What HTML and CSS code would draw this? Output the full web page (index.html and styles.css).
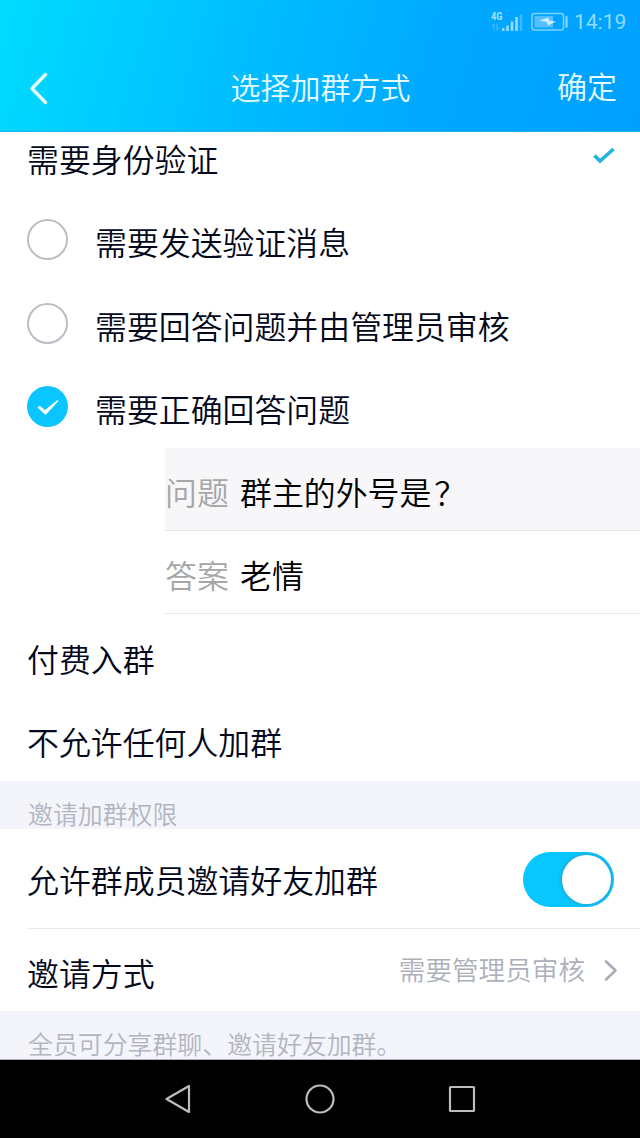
FILE: index.html
```html
<!DOCTYPE html>
<html lang="zh-CN">
<head>
    <meta charset="UTF-8">
    <meta name="viewport" content="width=device-width, initial-scale=1.0">
    <title>选择加群方式</title>
    <link rel="stylesheet" href="styles.css">
</head>
<body>
    <header class="header">
        <div class="status-bar">
            <svg class="signal" width="32" height="24" viewBox="0 0 32 24">
                <text x="0" y="9.5" class="net" textLength="11.5" lengthAdjust="spacingAndGlyphs">4G</text>
                <path class="data" d="M3 20v-6l-2 2M6 14v6l2-2"/>
                <path class="bars" d="M12.2 18v3M16.5 15.5V21M21 11.5V21M25.5 7v14"/>
                <path class="bars dim" d="M30 4v17"/>
            </svg>
            <svg class="battery" width="38" height="20" viewBox="0 0 38 20">
                <rect class="shell" x="1" y="1.5" width="31.5" height="16.5" rx="2.5"/>
                <rect class="level" x="3.5" y="4" width="18.5" height="11.5"/>
                <path class="bolt" d="M8.5 8.500L17 5.500l1.500 3 6.500 1L17 13.500l-1.500-3.500z"/>
                <path class="cap" d="M35.5 5v10"/>
            </svg>
            <span class="time">14:19</span>
        </div>
        <div class="title-bar">
            <svg class="back" width="20" height="34" viewBox="0 0 20 34">
                <path d="M16.5 3.500L3 17.500l13.500 14"/>
            </svg>
            <h1>选择加群方式</h1>
            <span class="confirm">确定</span>
        </div>
    </header>

    <main class="content">
        <div class="row row-first">
            <span class="label">需要身份验证</span>
            <svg class="check" width="24" height="20" viewBox="0 0 24 20">
                <path d="M2.5 9.500l5.500 5.500L21.500 3"/>
            </svg>
        </div>
        <div class="row">
            <span class="radio"></span>
            <span class="label">需要发送验证消息</span>
        </div>
        <div class="row row-tall">
            <span class="radio"></span>
            <span class="label">需要回答问题并由管理员审核</span>
        </div>
        <div class="row">
            <span class="radio checked">
                <svg width="26" height="20" viewBox="0 0 26 20">
                    <path d="M2.5 10.500l2-1.800 5.500 4.300L22.500 3l1 1L10.500 18z"/>
                </svg>
            </span>
            <span class="label">需要正确回答问题</span>
        </div>

        <div class="row field question">
            <span class="label field-name">问题</span>
            <span class="label field-value">群主的外号是<span class="mark">？</span></span>
        </div>
        <div class="row field">
            <span class="label field-name">答案</span>
            <span class="label field-value">老情</span>
        </div>

        <div class="row row-tall">
            <span class="label">付费入群</span>
        </div>
        <div class="row">
            <span class="label">不允许任何人加群</span>
        </div>

        <p class="hint">邀请加群权限</p>
        <div class="row invite">
            <span class="label">允许群成员邀请好友加群</span>
            <span class="switch"><span class="knob"></span></span>
        </div>
        <div class="row mode">
            <span class="label">邀请方式</span>
            <span class="value">需要管理员审核</span>
            <svg class="arrow" width="16" height="24" viewBox="0 0 16 24">
                <path d="M3 3.500l9.500 9L3 21.500"/>
            </svg>
        </div>
        <p class="hint hint-last">全员可分享群聊、邀请好友加群。</p>
    </main>

    <nav class="nav-bar">
        <svg width="30" height="32" viewBox="0 0 30 32">
            <path d="M3.500 16L26 3v26z"/>
        </svg>
        <svg width="32" height="32" viewBox="0 0 32 32">
            <circle cx="16" cy="16" r="13.500"/>
        </svg>
        <svg width="30" height="32" viewBox="0 0 30 32">
            <rect x="3" y="4" width="24" height="24" rx="0.500"/>
        </svg>
    </nav>
</body>
</html>
```
FILE: styles.css
```css
* {
    box-sizing: border-box;
}
body {
    margin: 0;
    width: 640px;
    height: 1138px;
    overflow: hidden;
    display: flex;
    flex-direction: column;
    font-family: "Noto Sans CJK SC", sans-serif;
    font-weight: 350;
    background-color: #fff;
    color: #03081a;
}
svg {
    flex-shrink: 0;
    fill: none;
    stroke-linecap: round;
    stroke-linejoin: round;
}

/* Header */
.header {
    height: 132px;
    background: linear-gradient(105deg, #00dcff 0%, #00c2ff 32%, #00a8ff 68%, #00a0ff 100%);
    border-bottom: 1px solid #20aeee;
    color: #e6fbff;
}
.status-bar {
    height: 44px;
    padding-right: 14px;
    display: flex;
    justify-content: flex-end;
    align-items: center;
    color: #8fdcff;
}
.signal {
    margin-right: 8px;
}
.signal .net {
    font: bold 11px Roboto, sans-serif;
    fill: #a5e3ff;
}
.signal .data {
    stroke: #4cc0ff;
    stroke-width: 1;
}
.signal .bars {
    stroke: #93dcff;
    stroke-width: 2.6;
    stroke-linecap: butt;
}
.signal .dim {
    stroke: #3fb8ff;
}
.battery {
    margin-right: 5px;
}
.battery .shell {
    stroke: #7dd2ff;
    stroke-width: 1.5;
}
.battery .level {
    fill: #55c0ff;
}
.battery .bolt {
    fill: #c9efff;
}
.battery .cap {
    stroke: #8fdcff;
    stroke-width: 2;
}
.time {
    width: 52px;
    font-family: Roboto, sans-serif;
    font-size: 21px;
    font-weight: 400;
    line-height: 44px;
    white-space: nowrap;
}
.title-bar {
    height: 87px;
    padding: 0 23px 0 29px;
    display: grid;
    grid-template-columns: 65px 1fr 70px;
    align-items: center;
    font-size: 30px;
    line-height: 40px;
}
.back {
    stroke: #e6fdff;
    stroke-width: 3.4;
}
.title-bar h1 {
    margin: 0 0 3px;
    font-size: 30px;
    font-weight: 350;
    text-align: center;
}
.confirm {
    padding-bottom: 5px;
    text-align: right;
    white-space: nowrap;
}

/* Rows */
.content {
    height: 928px;
}
.row {
    height: 83px;
    padding: 0 27px;
    display: flex;
    align-items: center;
    justify-content: flex-start;
}
.row-tall {
    height: 84px;
}
.row-first {
    height: 66px;
    padding-bottom: 18px;
    padding-right: 24px;
    justify-content: space-between;
}
.label {
    padding-top: 3px;
    font-size: 31.9px;
    line-height: 40px;
    white-space: nowrap;
}
.check {
    stroke: #22b2e2;
    stroke-width: 3.5;
    stroke-linecap: butt;
    stroke-linejoin: miter;
}
.radio {
    width: 41px;
    height: 41px;
    margin-right: 27px;
    display: flex;
    align-items: center;
    justify-content: center;
    border: 2px solid #bcbdc4;
    border-radius: 50%;
}
.radio.checked {
    background-color: #0ac5ff;
    border: none;
}
.radio svg {
    fill: #fff;
}
.field {
    margin-left: 165px;
    padding: 0;
    border-bottom: 1px solid #e8e8ec;
}
.question {
    background-color: #f7f7fa;
}
.field-name {
    width: 75px;
    color: #a6a6a6;
}
.field-value {
    color: #000;
}
.mark {
    margin-left: 3px;
}

/* Invite settings */
.hint {
    margin: 0;
    height: 48px;
    padding: 16px 28px 0;
    font-size: 24.9px;
    line-height: 32px;
    color: #b2b5c0;
    background-color: #f4f5fa;
    white-space: nowrap;
}
.hint-last {
    height: 49px;
}
.invite {
    height: 100px;
    margin-left: 27px;
    padding-left: 0;
    padding-right: 26px;
    justify-content: space-between;
    border-bottom: 1px solid #e9eaef;
}
.invite .label {
    padding-top: 1px;
}
.switch {
    width: 91px;
    height: 55px;
    margin-top: 1px;
    padding: 3px;
    display: flex;
    justify-content: flex-end;
    border-radius: 28px;
    background-color: #08c6ff;
}
.knob {
    width: 49px;
    height: 49px;
    border-radius: 50%;
    background-color: #fff;
    box-shadow: 0 0 4px rgba(80, 110, 130, 0.6);
}
.mode {
    height: 82px;
    padding-right: 21px;
}
.value {
    margin-left: auto;
    margin-right: 18px;
    padding-bottom: 3px;
    font-size: 26.6px;
    line-height: 36px;
    color: #adb0bb;
}
.arrow {
    stroke: #a9acb8;
    stroke-width: 2.6;
}

/* Android navigation */
.nav-bar {
    height: 79px;
    margin-top: -1px;
    padding: 0 163px;
    display: flex;
    align-items: center;
    justify-content: space-between;
    background-color: #000;
    border-top: 1px solid #b0b0b0;
}
.nav-bar svg {
    margin-bottom: 1px;
    stroke: #bdbdbd;
    stroke-width: 2.2;
}
```
